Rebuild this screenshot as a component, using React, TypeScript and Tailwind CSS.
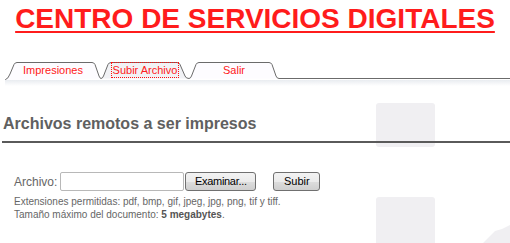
import React from "react";

const tabStroke = "#6b6b6b";

interface TabProps {
  label: string;
  width: number;
  path: string;
  fill: string;
  focused?: boolean;
}

function Tab({ label, width, path, fill, focused }: TabProps) {
  return (
    <div className="relative h-[18px] shrink-0 flex justify-center" style={{ width }}>
      <svg
        className="absolute inset-0"
        width={width}
        height={18}
        viewBox={`0 0 ${width} 18`}
        fill="none"
      >
        <path d={path + " Z"} fill={fill} stroke="none" />
        <path d={path} stroke={tabStroke} strokeWidth="1" />
      </svg>
      <span
        className={
          "relative h-[16px] leading-[15px] px-[1px] text-[11px] text-[#ff2020] " +
          (focused ? "border border-dotted border-[#ff1010]" : "border border-transparent")
        }
      >
        {label}
      </span>
    </div>
  );
}

export default function App() {
  return (
    <div className="relative w-[510px] h-[243px] overflow-hidden bg-white font-['Liberation_Sans',Arial,sans-serif]">
      {/* faded background marks */}
      <div className="absolute left-[376px] top-[103px] w-[59px] h-[44px] rounded-[3px] bg-[#f0eff2]" />
      <div className="absolute left-[376px] top-[197px] w-[59px] h-[60px] rounded-[3px] bg-[#f0eff2]" />
      <svg className="absolute left-[470px] top-[220px]" width="40" height="23" viewBox="0 0 40 23">
        <polygon points="13,23 25,11 32,9 40,5 40,23" fill="#f0eff2" />
      </svg>

      <div className="relative">
        <h1 className="pt-[3px] text-center text-[28px] leading-[32px] font-bold text-[#ff1c1c] underline decoration-2 underline-offset-[3px]">
          CENTRO DE SERVICIOS DIGITALES
        </h1>

        {/* tabs */}
        <div className="mt-[27px] flex items-end pl-[5px]">
          <Tab
            label="Impresiones"
            width={96}
            fill="#fdfcff"
            path="M0.5,18 L0.5,17.5 Q3,17 5,12 L9,2.5 Q10,0.5 12,0.5 L87,0.5 Q89,0.5 90,2.5 L94,14 Q95,16.5 96,16.5"
          />
          <Tab
            label="Subir Archivo"
            width={88}
            fill="#f1f2f5"
            focused
            path="M0,16.5 Q1.5,16.5 2.5,14 L7,2.5 Q8,0.5 10,0.5 L76,0.5 Q78,0.5 79,2.5 L84,14 Q85,16.5 88,16.5"
          />
          <Tab
            label="Salir"
            width={90}
            fill="#fdfcff"
            path="M0,16.5 Q1.5,16.5 2.5,14 L7,2.5 Q8,0.5 10,0.5 L80,0.5 Q82,0.5 83,2.5 L87,14 Q88,16.5 90,16.5"
          />
          <div className="flex-1 h-[18px] flex items-end">
            <div className="w-full h-[1.5px] mb-[1px] bg-[#6b6b6b]" />
          </div>
        </div>
        <div className="ml-[5px] h-[6px] bg-gradient-to-b from-[#e9ecf0] to-white" />

        {/* heading */}
        <div className="mt-[28px] ml-[2px] pl-[1px] pb-[7px] border-b-2 border-[#5a5a5a]">
          <h2 className="text-[16px] leading-[20px] font-bold text-[#606060]">
            Archivos remotos a ser impresos
          </h2>
        </div>

        {/* upload form */}
        <div className="mt-[29px] pl-[14px] flex items-center">
          <label className="text-[12px] text-[#666]">Archivo:</label>
          <input
            type="text"
            className="ml-[3px] w-[124px] h-[19px] border border-[#b8b8b8] rounded-[2px] bg-white outline-none"
          />
          <button className="ml-[1px] w-[71px] h-[19px] border border-[#707070] rounded-[3px] bg-[linear-gradient(#f3f3f3,#ebebeb_50%,#dddddd_50%,#cfcfcf)] text-[11px] leading-none text-black tracking-[-0.3px]">
            Examinar...
          </button>
          <button className="ml-[17px] w-[47px] h-[19px] border border-[#707070] rounded-[3px] bg-[linear-gradient(#f3f3f3,#ebebeb_50%,#dddddd_50%,#cfcfcf)] text-[11px] leading-none text-black">
            Subir
          </button>
        </div>
        <div className="mt-[4px] pl-[14px] text-[10px] leading-[13px] text-[#666]">
          <p>Extensiones permitidas: pdf, bmp, gif, jpeg, jpg, png, tif y tiff.</p>
          <p>
            Tamaño máximo del documento: <b className="text-[#555]">5 megabytes</b>.
          </p>
        </div>
      </div>
    </div>
  );
}
